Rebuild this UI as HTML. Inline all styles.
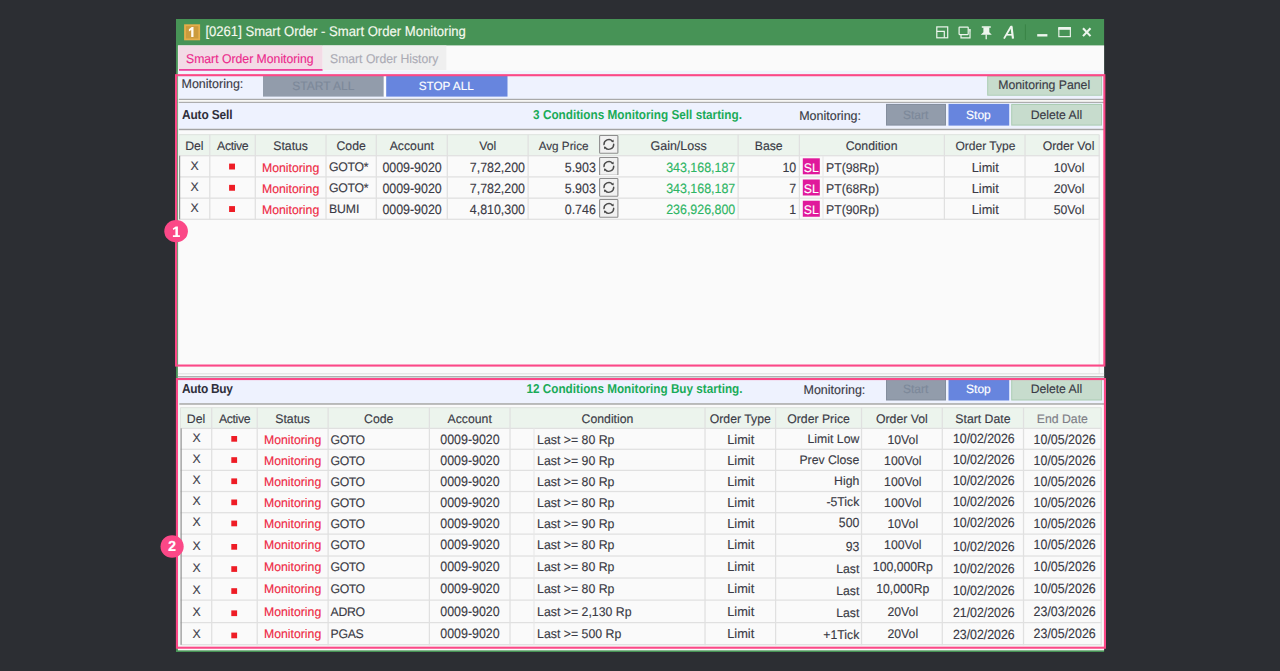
<!DOCTYPE html>
<html><head><meta charset="utf-8"><title>Smart Order Monitoring</title>
<style>
html,body{margin:0;padding:0;}
body{width:1280px;height:671px;overflow:hidden;background:#2c2e33;position:relative;font-family:"Liberation Sans",sans-serif;text-rendering:geometricPrecision;}
.a{position:absolute;}
.t{position:absolute;white-space:pre;height:20px;line-height:20px;-webkit-text-stroke:0.14px currentColor;}
svg.L{position:absolute;left:0;top:0;}
</style></head><body>
<svg class="L" width="1280" height="671" viewBox="0 0 1280 671">
<rect x="176.00" y="19.00" width="928.10" height="633.00" fill="#479356" />
<rect x="177.90" y="45.40" width="926.20" height="604.95" fill="#fafafa" />
<rect x="184.10" y="24.30" width="16.00" height="16.00" fill="#e6ae4a" />
<rect x="185.90" y="26.10" width="12.40" height="12.40" fill="#cb9b3d" />
<path d="M193.5 26.9V36.9H191.2V29.9L188.9 31.5V29.3L191.7 26.9Z" fill="#fffaf0"/>
<rect x="178.20" y="45.50" width="144.40" height="24.00" fill="#f3dbe6" />
<rect x="179.00" y="69.10" width="143.60" height="1.80" fill="#ec2f93" />
<rect x="322.80" y="45.50" width="123.60" height="24.60" fill="#efefef" />
<rect x="177.90" y="70.80" width="926.20" height="3.60" fill="#f1f4fd" />
<rect x="177.90" y="76.00" width="926.20" height="23.00" fill="#eef2fe" />
<rect x="263.00" y="76.00" width="120.80" height="20.60" fill="#929cab" />
<rect x="383.80" y="76.00" width="2.40" height="20.60" fill="#fcfcfe" />
<rect x="386.20" y="76.00" width="121.30" height="20.60" fill="#6785de" />
<rect x="987.20" y="75.90" width="114.90" height="19.80" fill="#a9cbb0" />
<rect x="988.20" y="76.60" width="112.90" height="18.20" fill="#c7dccd" />
<rect x="177.90" y="98.78" width="926.20" height="1.25" fill="#a9a9a9" />
<rect x="177.90" y="100.05" width="926.20" height="1.80" fill="#f7f7f4" />
<rect x="177.90" y="101.80" width="926.20" height="1.20" fill="#adadad" />
<rect x="177.90" y="103.00" width="926.20" height="25.75" fill="#eef2fe" />
<rect x="177.90" y="128.75" width="926.20" height="1.45" fill="#a4a4a4" />
<rect x="886.00" y="103.90" width="60.00" height="21.70" fill="#848e9d" />
<rect x="887.00" y="104.90" width="58.00" height="19.70" fill="#929cab" />
<rect x="948.50" y="103.90" width="60.70" height="21.70" fill="#6785de" />
<rect x="1011.20" y="103.90" width="90.80" height="21.70" fill="#a9cbb0" />
<rect x="1012.20" y="104.90" width="88.80" height="19.70" fill="#c7dccd" />
<rect x="178.90" y="134.60" width="920.30" height="21.10" fill="#ecf4ed" />
<rect x="178.90" y="155.70" width="920.30" height="63.60" fill="#fafafa" />
<rect x="178.90" y="134.00" width="920.30" height="1.20" fill="#e2e6e2" />
<rect x="178.90" y="155.07" width="920.90" height="1.25" fill="#e0e0e0" />
<rect x="178.90" y="176.28" width="920.90" height="1.25" fill="#e0e0e0" />
<rect x="178.90" y="197.53" width="920.90" height="1.25" fill="#e0e0e0" />
<rect x="178.90" y="218.68" width="920.90" height="1.25" fill="#e0e0e0" />
<rect x="209.18" y="134.60" width="1.25" height="85.30" fill="#e0e0e0" />
<rect x="254.68" y="134.60" width="1.25" height="85.30" fill="#e0e0e0" />
<rect x="325.38" y="134.60" width="1.25" height="85.30" fill="#e0e0e0" />
<rect x="375.68" y="134.60" width="1.25" height="85.30" fill="#e0e0e0" />
<rect x="446.68" y="134.60" width="1.25" height="85.30" fill="#e0e0e0" />
<rect x="527.48" y="134.60" width="1.25" height="85.30" fill="#e0e0e0" />
<rect x="737.48" y="134.60" width="1.25" height="85.30" fill="#e0e0e0" />
<rect x="798.77" y="134.60" width="1.25" height="85.30" fill="#e0e0e0" />
<rect x="943.77" y="134.60" width="1.25" height="85.30" fill="#e0e0e0" />
<rect x="1024.38" y="134.60" width="1.25" height="85.30" fill="#e0e0e0" />
<rect x="1098.58" y="134.60" width="1.25" height="85.30" fill="#e0e0e0" />
<rect x="178.30" y="134.60" width="1.20" height="21.10" fill="#e0e4e0" />
<rect x="179.00" y="155.70" width="1.20" height="63.60" fill="#909090" />
<rect x="822.45" y="155.70" width="1.10" height="63.60" fill="#e8e8e8" />
<rect x="1098.65" y="219.30" width="1.10" height="154.50" fill="#e6e6e6" />
<rect x="229.10" y="163.60" width="5.90" height="5.90" fill="#ee1c25" />
<rect x="802.80" y="158.30" width="17.00" height="16.00" fill="#e0199b" />
<rect x="229.10" y="184.85" width="5.90" height="5.90" fill="#ee1c25" />
<rect x="802.80" y="179.50" width="17.00" height="16.00" fill="#e0199b" />
<rect x="229.10" y="206.10" width="5.90" height="5.90" fill="#ee1c25" />
<rect x="802.80" y="200.75" width="17.00" height="16.00" fill="#e0199b" />
<rect x="177.90" y="373.30" width="926.20" height="1.00" fill="#dedede" />
<rect x="177.90" y="376.00" width="926.20" height="1.20" fill="#b0b0b0" />
<rect x="177.90" y="377.05" width="926.20" height="0.90" fill="#c9d6d6" />
<rect x="177.90" y="379.80" width="926.20" height="23.45" fill="#eef2fe" />
<rect x="177.90" y="403.25" width="926.20" height="1.45" fill="#a4a4a4" />
<rect x="886.00" y="379.00" width="60.00" height="21.50" fill="#848e9d" />
<rect x="887.00" y="380.00" width="58.00" height="19.50" fill="#929cab" />
<rect x="948.50" y="379.00" width="60.70" height="21.50" fill="#6785de" />
<rect x="1011.20" y="379.00" width="90.80" height="21.50" fill="#a9cbb0" />
<rect x="1012.20" y="380.00" width="88.80" height="19.50" fill="#c7dccd" />
<rect x="180.40" y="407.60" width="920.80" height="20.80" fill="#ecf4ed" />
<rect x="180.40" y="428.40" width="920.80" height="216.30" fill="#fafafa" />
<rect x="180.40" y="407.00" width="920.80" height="1.20" fill="#e2e6e2" />
<rect x="180.40" y="427.77" width="921.40" height="1.25" fill="#e0e0e0" />
<rect x="180.40" y="448.68" width="921.40" height="1.25" fill="#e0e0e0" />
<rect x="180.40" y="469.77" width="921.40" height="1.25" fill="#e0e0e0" />
<rect x="180.40" y="490.88" width="921.40" height="1.25" fill="#e0e0e0" />
<rect x="180.40" y="512.08" width="921.40" height="1.25" fill="#e0e0e0" />
<rect x="180.40" y="533.48" width="921.40" height="1.25" fill="#e0e0e0" />
<rect x="180.40" y="555.38" width="921.40" height="1.25" fill="#e0e0e0" />
<rect x="180.40" y="577.38" width="921.40" height="1.25" fill="#e0e0e0" />
<rect x="180.40" y="599.48" width="921.40" height="1.25" fill="#e0e0e0" />
<rect x="180.40" y="621.98" width="921.40" height="1.25" fill="#e0e0e0" />
<rect x="180.40" y="644.08" width="921.40" height="1.25" fill="#e0e0e0" />
<rect x="211.07" y="407.60" width="1.25" height="237.70" fill="#e0e0e0" />
<rect x="256.57" y="407.60" width="1.25" height="237.70" fill="#e0e0e0" />
<rect x="327.48" y="407.60" width="1.25" height="237.70" fill="#e0e0e0" />
<rect x="428.77" y="407.60" width="1.25" height="237.70" fill="#e0e0e0" />
<rect x="509.38" y="407.60" width="1.25" height="237.70" fill="#e0e0e0" />
<rect x="704.38" y="407.60" width="1.25" height="237.70" fill="#e0e0e0" />
<rect x="774.98" y="407.60" width="1.25" height="237.70" fill="#e0e0e0" />
<rect x="860.88" y="407.60" width="1.25" height="237.70" fill="#e0e0e0" />
<rect x="941.67" y="407.60" width="1.25" height="237.70" fill="#e0e0e0" />
<rect x="1022.88" y="407.60" width="1.25" height="237.70" fill="#e0e0e0" />
<rect x="1100.58" y="407.60" width="1.25" height="237.70" fill="#e0e0e0" />
<rect x="179.80" y="407.60" width="1.20" height="20.80" fill="#e0e4e0" />
<rect x="180.50" y="428.40" width="1.20" height="216.30" fill="#909090" />
<rect x="533.45" y="428.40" width="1.10" height="216.30" fill="#e8e8e8" />
<rect x="231.30" y="436.00" width="5.80" height="5.70" fill="#ee1c25" />
<rect x="231.30" y="457.20" width="5.80" height="5.70" fill="#ee1c25" />
<rect x="231.30" y="478.40" width="5.80" height="5.70" fill="#ee1c25" />
<rect x="231.30" y="499.50" width="5.80" height="5.70" fill="#ee1c25" />
<rect x="231.30" y="520.60" width="5.80" height="5.70" fill="#ee1c25" />
<rect x="231.30" y="544.00" width="5.80" height="5.70" fill="#ee1c25" />
<rect x="231.30" y="566.20" width="5.80" height="5.70" fill="#ee1c25" />
<rect x="231.30" y="588.20" width="5.80" height="5.70" fill="#ee1c25" />
<rect x="231.30" y="610.40" width="5.80" height="5.70" fill="#ee1c25" />
<rect x="231.30" y="632.60" width="5.80" height="5.70" fill="#ee1c25" />
<rect x="177.90" y="76.00" width="0.90" height="288.60" fill="#e6f3ec" />
<rect x="178.00" y="380.00" width="1.30" height="266.70" fill="#eaf8f0" />
</svg>
<svg class="a" style="left:930px;top:19px" width="174" height="27" viewBox="930 19 174 27" fill="none" stroke="#eef5ee" stroke-width="1.2">
<rect x="936.8" y="26.9" width="10.9" height="10.9"/><path d="M936.8 31.3H944.3V37.8"/>
<rect x="959.1" y="27.1" width="9.1" height="7.5" rx="0.5"/><path d="M961.0 35.0V37.8H970.0V29.7H968.6"/><path d="M968.8 29.2h1.7v2.4h-1.7z" fill="#cfe3d2" stroke="none"/>
<path d="M981.8 27.0H990.8" stroke-width="1.5"/><path d="M983.4 27.2H989.3V32.2L991.8 34.8H980.7L983.4 32.2Z" fill="#eef5ee" stroke="none"/><path d="M986.2 34.6V39.3" stroke-width="1.25"/>
<path d="M1004.0 38.6L1010.9 26.7H1012.3" stroke-width="1.85" stroke-linejoin="bevel"/><path d="M1011.5 26.7L1013.0 38.6" stroke-width="2.2"/><path d="M1006.8 34.8H1012.6" stroke-width="1.6"/>
<path d="M1025.4 24.3V40" stroke="#3a8346" stroke-width="1"/>
<path d="M1037.2 35.3h10.2" stroke-width="2.4"/>
<rect x="1058.85" y="28.4" width="11.5" height="8.25" stroke-width="1.15"/><path d="M1058.25 28.4h12.7" stroke-width="2.8"/>
<path d="M1083.0 28.2L1090.5 36.1M1090.5 28.2L1083.0 36.1" stroke-width="2.1"/>
</svg>
<svg class="a" style="left:599.45px;top:135.20px" width="19.6" height="18.9" viewBox="0 0 19.6 18.9">
<rect x="0.6" y="0.55" width="18.3" height="17.7" rx="0.8" fill="#f1f1f1" stroke="#8d8d8d" stroke-width="1.1"/>
<path d="M5.00 9.62A4.85 4.85 0 0 1 13.45 6.20M14.70 9.28A4.85 4.85 0 0 1 6.25 12.70" fill="none" stroke="#4a4a4a" stroke-width="1.45" stroke-linecap="round"/>
<path d="M14.55 4.60l0.2 2.7l-2.5 -0.4z" fill="#4a4a4a"/>
<path d="M5.15 14.30l-0.2 -2.7l2.5 0.4z" fill="#4a4a4a"/>
</svg>
<svg class="a" style="left:599.45px;top:156.55px" width="19.6" height="18.9" viewBox="0 0 19.6 18.9">
<rect x="0.6" y="0.55" width="18.3" height="17.7" rx="0.8" fill="#f1f1f1" stroke="#8d8d8d" stroke-width="1.1"/>
<path d="M5.00 9.62A4.85 4.85 0 0 1 13.45 6.20M14.70 9.28A4.85 4.85 0 0 1 6.25 12.70" fill="none" stroke="#4a4a4a" stroke-width="1.45" stroke-linecap="round"/>
<path d="M14.55 4.60l0.2 2.7l-2.5 -0.4z" fill="#4a4a4a"/>
<path d="M5.15 14.30l-0.2 -2.7l2.5 0.4z" fill="#4a4a4a"/>
</svg>
<svg class="a" style="left:599.45px;top:177.75px" width="19.6" height="18.9" viewBox="0 0 19.6 18.9">
<rect x="0.6" y="0.55" width="18.3" height="17.7" rx="0.8" fill="#f1f1f1" stroke="#8d8d8d" stroke-width="1.1"/>
<path d="M5.00 9.62A4.85 4.85 0 0 1 13.45 6.20M14.70 9.28A4.85 4.85 0 0 1 6.25 12.70" fill="none" stroke="#4a4a4a" stroke-width="1.45" stroke-linecap="round"/>
<path d="M14.55 4.60l0.2 2.7l-2.5 -0.4z" fill="#4a4a4a"/>
<path d="M5.15 14.30l-0.2 -2.7l2.5 0.4z" fill="#4a4a4a"/>
</svg>
<svg class="a" style="left:599.45px;top:199.00px" width="19.6" height="18.9" viewBox="0 0 19.6 18.9">
<rect x="0.6" y="0.55" width="18.3" height="17.7" rx="0.8" fill="#f1f1f1" stroke="#8d8d8d" stroke-width="1.1"/>
<path d="M5.00 9.62A4.85 4.85 0 0 1 13.45 6.20M14.70 9.28A4.85 4.85 0 0 1 6.25 12.70" fill="none" stroke="#4a4a4a" stroke-width="1.45" stroke-linecap="round"/>
<path d="M14.55 4.60l0.2 2.7l-2.5 -0.4z" fill="#4a4a4a"/>
<path d="M5.15 14.30l-0.2 -2.7l2.5 0.4z" fill="#4a4a4a"/>
</svg>
<svg class="L" style="z-index:4" width="1280" height="671" viewBox="0 0 1280 671">
<rect x="176.05" y="75.20" width="928.30" height="290.35" fill="none" stroke="#fb4887" stroke-width="2.1"/>
<rect x="176.95" y="379.05" width="928.00" height="268.65" fill="none" stroke="#fb4887" stroke-width="2.1"/>
<ellipse cx="176.1" cy="231.2" rx="11.8" ry="11.2" fill="#fb4887"/>
<path d="M175.7 226.4H177.9V235.2H179.9V236.9H172.9V235.2H175.4V228.7L173.3 229.9L172.8 228.4Z" fill="#fff"/>
<ellipse cx="172.1" cy="546.5" rx="11.6" ry="11.3" fill="#fb4887"/>
</svg>
<div class="t" style="top:22px;font-size:13.1px;color:#f5f9ee;transform:scaleY(1.07);transform-origin:0 14px;left:205.40px;">[0261] Smart Order - Smart Order Monitoring</div>
<div class="t" style="top:49px;font-size:12.23px;color:#ec2a8c;transform:scaleY(1.04);transform-origin:0 14px;left:186.00px;">Smart Order Monitoring</div>
<div class="t" style="top:49px;font-size:12.2px;color:#ababb5;transform:scaleY(1.04);transform-origin:0 14px;left:330.00px;">Smart Order History</div>
<div class="t" style="top:74px;font-size:12.5px;color:#3a3a45;transform:scaleY(1.015);transform-origin:0 14px;left:181.50px;">Monitoring:</div>
<div class="t" style="top:76px;font-size:12.0px;color:#7d899a;transform:scaleY(1.015);transform-origin:0 14px;left:173.40px;width:300px;text-align:center;">START ALL</div>
<div class="t" style="top:77px;font-size:11.75px;color:#fff;transform:scaleY(1.015);transform-origin:0 13px;left:296.20px;width:300px;text-align:center;">STOP ALL</div>
<div class="t" style="top:75px;font-size:12.26px;color:#3a3a45;transform:scaleY(1.015);transform-origin:0 14px;left:894.20px;width:300px;text-align:center;">Monitoring Panel</div>
<div class="t" style="top:105px;font-size:11.9px;color:#2f2f3b;font-weight:bold;letter-spacing:-0.12px;-webkit-text-stroke:0;transform:scaleY(1.09);transform-origin:0 14px;left:182.00px;">Auto Sell</div>
<div class="t" style="top:106px;font-size:11.76px;color:#1aab58;font-weight:bold;-webkit-text-stroke:0;transform:scaleY(1.1);transform-origin:0 13px;left:533.10px;">3 Conditions Monitoring Sell starting.</div>
<div class="t" style="top:106px;font-size:12.5px;color:#3a3a45;transform:scaleY(1.015);transform-origin:0 14px;left:799.20px;">Monitoring:</div>
<div class="t" style="top:105px;font-size:12.0px;color:#7d899a;transform:scaleY(1.015);transform-origin:0 14px;left:765.60px;width:300px;text-align:center;">Start</div>
<div class="t" style="top:105px;font-size:12.0px;color:#fff;transform:scaleY(1.015);transform-origin:0 14px;left:828.40px;width:300px;text-align:center;">Stop</div>
<div class="t" style="top:105px;font-size:12.2px;color:#3a3a45;transform:scaleY(1.015);transform-origin:0 14px;left:906.40px;width:300px;text-align:center;">Delete All</div>
<div class="t" style="top:136px;font-size:12.25px;color:#3a3a45;transform:scaleY(1.015);transform-origin:0 14px;left:44.35px;width:300px;text-align:center;">Del</div>
<div class="t" style="top:136px;font-size:12.25px;color:#3a3a45;letter-spacing:-0.35px;transform:scaleY(1.015);transform-origin:0 14px;left:82.73px;width:300px;text-align:center;">Active</div>
<div class="t" style="top:136px;font-size:12.25px;color:#3a3a45;transform:scaleY(1.015);transform-origin:0 14px;left:140.65px;width:300px;text-align:center;">Status</div>
<div class="t" style="top:136px;font-size:12.25px;color:#3a3a45;transform:scaleY(1.015);transform-origin:0 14px;left:201.15px;width:300px;text-align:center;">Code</div>
<div class="t" style="top:136px;font-size:12.25px;color:#3a3a45;transform:scaleY(1.015);transform-origin:0 14px;left:261.80px;width:300px;text-align:center;">Account</div>
<div class="t" style="top:136px;font-size:12.25px;color:#3a3a45;transform:scaleY(1.015);transform-origin:0 14px;left:337.70px;width:300px;text-align:center;">Vol</div>
<div class="t" style="top:137px;font-size:11.7px;color:#3a3a45;transform:scaleY(1.015);transform-origin:0 13px;left:413.60px;width:300px;text-align:center;">Avg Price</div>
<div class="t" style="top:136px;font-size:12.5px;color:#3a3a45;transform:scaleY(1.015);transform-origin:0 14px;left:528.60px;width:300px;text-align:center;">Gain/Loss</div>
<div class="t" style="top:136px;font-size:12.25px;color:#3a3a45;transform:scaleY(1.015);transform-origin:0 14px;left:618.70px;width:300px;text-align:center;">Base</div>
<div class="t" style="top:136px;font-size:12.25px;color:#3a3a45;transform:scaleY(1.015);transform-origin:0 14px;left:721.60px;width:300px;text-align:center;">Condition</div>
<div class="t" style="top:136px;font-size:12.04px;color:#3a3a45;transform:scaleY(1.015);transform-origin:0 14px;left:835.40px;width:300px;text-align:center;">Order Type</div>
<div class="t" style="top:136px;font-size:12.25px;color:#3a3a45;transform:scaleY(1.015);transform-origin:0 14px;left:794.40px;width:300px;text-align:right;">Order Vol</div>
<div class="t" style="top:156px;font-size:12.25px;color:#40404a;transform:scaleY(1.015);transform-origin:0 14px;left:44.60px;width:300px;text-align:center;">X</div>
<div class="t" style="top:158px;font-size:12.26px;color:#ee2743;transform:scaleY(1.015);transform-origin:0 14px;left:262.00px;">Monitoring</div>
<div class="t" style="top:157px;font-size:12.25px;color:#3a3a45;letter-spacing:-0.3px;transform:scaleY(1.015);transform-origin:0 14px;left:329.00px;">GOTO*</div>
<div class="t" style="top:158px;font-size:12.42px;color:#3a3a45;transform:scaleY(1.085);transform-origin:0 14px;left:382.40px;">0009-9020</div>
<div class="t" style="top:158px;font-size:12.42px;color:#3a3a45;transform:scaleY(1.085);transform-origin:0 14px;left:225.00px;width:300px;text-align:right;">7,782,200</div>
<div class="t" style="top:158px;font-size:12.42px;color:#3a3a45;transform:scaleY(1.085);transform-origin:0 14px;left:295.80px;width:300px;text-align:right;">5.903</div>
<div class="t" style="top:158px;font-size:12.42px;color:#2db564;transform:scaleY(1.085);transform-origin:0 14px;left:435.20px;width:300px;text-align:right;">343,168,187</div>
<div class="t" style="top:158px;font-size:12.42px;color:#3a3a45;transform:scaleY(1.085);transform-origin:0 14px;left:496.20px;width:300px;text-align:right;">10</div>
<div class="t" style="top:158px;font-size:12.2px;color:#fff;transform:scaleY(1.015);transform-origin:0 14px;left:661.30px;width:300px;text-align:center;">SL</div>
<div class="t" style="top:158px;font-size:12.25px;color:#3a3a45;transform:scaleY(1.03);transform-origin:0 14px;left:826.00px;">PT(98Rp)</div>
<div class="t" style="top:158px;font-size:12.8px;color:#3a3a45;transform:scaleY(1.015);transform-origin:0 14px;left:835.20px;width:300px;text-align:center;">Limit</div>
<div class="t" style="top:158px;font-size:12.25px;color:#3a3a45;transform:scaleY(1.03);transform-origin:0 14px;left:784.40px;width:300px;text-align:right;">10Vol</div>
<div class="t" style="top:177px;font-size:12.25px;color:#40404a;transform:scaleY(1.015);transform-origin:0 14px;left:44.60px;width:300px;text-align:center;">X</div>
<div class="t" style="top:179px;font-size:12.26px;color:#ee2743;transform:scaleY(1.015);transform-origin:0 14px;left:262.00px;">Monitoring</div>
<div class="t" style="top:178px;font-size:12.25px;color:#3a3a45;letter-spacing:-0.3px;transform:scaleY(1.015);transform-origin:0 14px;left:329.00px;">GOTO*</div>
<div class="t" style="top:179px;font-size:12.42px;color:#3a3a45;transform:scaleY(1.085);transform-origin:0 14px;left:382.40px;">0009-9020</div>
<div class="t" style="top:179px;font-size:12.42px;color:#3a3a45;transform:scaleY(1.085);transform-origin:0 14px;left:225.00px;width:300px;text-align:right;">7,782,200</div>
<div class="t" style="top:179px;font-size:12.42px;color:#3a3a45;transform:scaleY(1.085);transform-origin:0 14px;left:295.80px;width:300px;text-align:right;">5.903</div>
<div class="t" style="top:179px;font-size:12.42px;color:#2db564;transform:scaleY(1.085);transform-origin:0 14px;left:435.20px;width:300px;text-align:right;">343,168,187</div>
<div class="t" style="top:179px;font-size:12.42px;color:#3a3a45;transform:scaleY(1.085);transform-origin:0 14px;left:496.20px;width:300px;text-align:right;">7</div>
<div class="t" style="top:179px;font-size:12.2px;color:#fff;transform:scaleY(1.015);transform-origin:0 14px;left:661.30px;width:300px;text-align:center;">SL</div>
<div class="t" style="top:179px;font-size:12.25px;color:#3a3a45;transform:scaleY(1.03);transform-origin:0 14px;left:826.00px;">PT(68Rp)</div>
<div class="t" style="top:179px;font-size:12.8px;color:#3a3a45;transform:scaleY(1.015);transform-origin:0 14px;left:835.20px;width:300px;text-align:center;">Limit</div>
<div class="t" style="top:179px;font-size:12.25px;color:#3a3a45;transform:scaleY(1.03);transform-origin:0 14px;left:784.40px;width:300px;text-align:right;">20Vol</div>
<div class="t" style="top:198px;font-size:12.25px;color:#40404a;transform:scaleY(1.015);transform-origin:0 14px;left:44.60px;width:300px;text-align:center;">X</div>
<div class="t" style="top:200px;font-size:12.26px;color:#ee2743;transform:scaleY(1.015);transform-origin:0 14px;left:262.00px;">Monitoring</div>
<div class="t" style="top:199px;font-size:12.25px;color:#3a3a45;letter-spacing:-0.1px;transform:scaleY(1.015);transform-origin:0 14px;left:329.00px;">BUMI</div>
<div class="t" style="top:200px;font-size:12.42px;color:#3a3a45;transform:scaleY(1.085);transform-origin:0 14px;left:382.40px;">0009-9020</div>
<div class="t" style="top:200px;font-size:12.42px;color:#3a3a45;transform:scaleY(1.085);transform-origin:0 14px;left:225.00px;width:300px;text-align:right;">4,810,300</div>
<div class="t" style="top:200px;font-size:12.42px;color:#3a3a45;transform:scaleY(1.085);transform-origin:0 14px;left:295.80px;width:300px;text-align:right;">0.746</div>
<div class="t" style="top:200px;font-size:12.42px;color:#2db564;transform:scaleY(1.085);transform-origin:0 14px;left:435.20px;width:300px;text-align:right;">236,926,800</div>
<div class="t" style="top:200px;font-size:12.42px;color:#3a3a45;transform:scaleY(1.085);transform-origin:0 14px;left:496.20px;width:300px;text-align:right;">1</div>
<div class="t" style="top:200px;font-size:12.2px;color:#fff;transform:scaleY(1.015);transform-origin:0 14px;left:661.30px;width:300px;text-align:center;">SL</div>
<div class="t" style="top:200px;font-size:12.25px;color:#3a3a45;transform:scaleY(1.03);transform-origin:0 14px;left:826.00px;">PT(90Rp)</div>
<div class="t" style="top:200px;font-size:12.8px;color:#3a3a45;transform:scaleY(1.015);transform-origin:0 14px;left:835.20px;width:300px;text-align:center;">Limit</div>
<div class="t" style="top:200px;font-size:12.25px;color:#3a3a45;transform:scaleY(1.03);transform-origin:0 14px;left:784.40px;width:300px;text-align:right;">50Vol</div>
<div class="t" style="top:379px;font-size:11.9px;color:#2f2f3b;font-weight:bold;letter-spacing:-0.3px;-webkit-text-stroke:0;transform:scaleY(1.09);transform-origin:0 14px;left:182.00px;">Auto Buy</div>
<div class="t" style="top:380px;font-size:11.71px;color:#1aab58;font-weight:bold;-webkit-text-stroke:0;transform:scaleY(1.1);transform-origin:0 13px;left:526.60px;">12 Conditions Monitoring Buy starting.</div>
<div class="t" style="top:380px;font-size:12.5px;color:#3a3a45;transform:scaleY(1.015);transform-origin:0 14px;left:803.50px;">Monitoring:</div>
<div class="t" style="top:379px;font-size:12.0px;color:#7d899a;transform:scaleY(1.015);transform-origin:0 14px;left:765.60px;width:300px;text-align:center;">Start</div>
<div class="t" style="top:379px;font-size:12.0px;color:#fff;transform:scaleY(1.015);transform-origin:0 14px;left:828.40px;width:300px;text-align:center;">Stop</div>
<div class="t" style="top:379px;font-size:12.2px;color:#3a3a45;transform:scaleY(1.015);transform-origin:0 14px;left:906.40px;width:300px;text-align:center;">Delete All</div>
<div class="t" style="top:409px;font-size:12.25px;color:#3a3a45;transform:scaleY(1.015);transform-origin:0 14px;left:46.05px;width:300px;text-align:center;">Del</div>
<div class="t" style="top:409px;font-size:12.25px;color:#3a3a45;letter-spacing:-0.35px;transform:scaleY(1.015);transform-origin:0 14px;left:84.62px;width:300px;text-align:center;">Active</div>
<div class="t" style="top:409px;font-size:12.25px;color:#3a3a45;transform:scaleY(1.015);transform-origin:0 14px;left:142.65px;width:300px;text-align:center;">Status</div>
<div class="t" style="top:409px;font-size:12.25px;color:#3a3a45;transform:scaleY(1.015);transform-origin:0 14px;left:228.75px;width:300px;text-align:center;">Code</div>
<div class="t" style="top:409px;font-size:12.25px;color:#3a3a45;transform:scaleY(1.015);transform-origin:0 14px;left:319.70px;width:300px;text-align:center;">Account</div>
<div class="t" style="top:409px;font-size:12.25px;color:#3a3a45;transform:scaleY(1.015);transform-origin:0 14px;left:457.50px;width:300px;text-align:center;">Condition</div>
<div class="t" style="top:409px;font-size:12.25px;color:#3a3a45;transform:scaleY(1.015);transform-origin:0 14px;left:590.30px;width:300px;text-align:center;">Order Type</div>
<div class="t" style="top:409px;font-size:12.25px;color:#3a3a45;transform:scaleY(1.015);transform-origin:0 14px;left:668.55px;width:300px;text-align:center;">Order Price</div>
<div class="t" style="top:409px;font-size:12.25px;color:#3a3a45;transform:scaleY(1.015);transform-origin:0 14px;left:751.90px;width:300px;text-align:center;">Order Vol</div>
<div class="t" style="top:409px;font-size:12.25px;color:#3a3a45;transform:scaleY(1.015);transform-origin:0 14px;left:832.90px;width:300px;text-align:center;">Start Date</div>
<div class="t" style="top:409px;font-size:12.25px;color:#7e7e86;transform:scaleY(1.015);transform-origin:0 14px;left:912.35px;width:300px;text-align:center;">End Date</div>
<div class="t" style="top:428px;font-size:12.25px;color:#40404a;transform:scaleY(1.015);transform-origin:0 14px;left:46.70px;width:300px;text-align:center;">X</div>
<div class="t" style="top:430px;font-size:12.26px;color:#ee2743;transform:scaleY(1.015);transform-origin:0 14px;left:264.00px;">Monitoring</div>
<div class="t" style="top:430px;font-size:12.25px;color:#3a3a45;letter-spacing:-0.4px;transform:scaleY(1.015);transform-origin:0 14px;left:330.50px;">GOTO</div>
<div class="t" style="top:430px;font-size:12.42px;color:#3a3a45;transform:scaleY(1.085);transform-origin:0 14px;left:440.30px;">0009-9020</div>
<div class="t" style="top:430px;font-size:12.32px;color:#3a3a45;transform:scaleY(1.03);transform-origin:0 14px;left:537.10px;">Last >= 80 Rp</div>
<div class="t" style="top:430px;font-size:12.8px;color:#3a3a45;transform:scaleY(1.015);transform-origin:0 14px;left:590.75px;width:300px;text-align:center;">Limit</div>
<div class="t" style="top:429px;font-size:12.25px;color:#3a3a45;transform:scaleY(1.015);transform-origin:0 14px;left:559.30px;width:300px;text-align:right;">Limit Low</div>
<div class="t" style="top:430px;font-size:12.25px;color:#3a3a45;transform:scaleY(1.03);transform-origin:0 14px;left:752.80px;width:300px;text-align:center;">10Vol</div>
<div class="t" style="top:429px;font-size:12.35px;color:#3a3a45;transform:scaleY(1.085);transform-origin:0 14px;left:714.70px;width:300px;text-align:right;">10/02/2026</div>
<div class="t" style="top:430px;font-size:12.42px;color:#3a3a45;transform:scaleY(1.085);transform-origin:0 14px;left:795.70px;width:300px;text-align:right;">10/05/2026</div>
<div class="t" style="top:449px;font-size:12.25px;color:#40404a;transform:scaleY(1.015);transform-origin:0 14px;left:46.70px;width:300px;text-align:center;">X</div>
<div class="t" style="top:451px;font-size:12.26px;color:#ee2743;transform:scaleY(1.015);transform-origin:0 14px;left:264.00px;">Monitoring</div>
<div class="t" style="top:451px;font-size:12.25px;color:#3a3a45;letter-spacing:-0.4px;transform:scaleY(1.015);transform-origin:0 14px;left:330.50px;">GOTO</div>
<div class="t" style="top:451px;font-size:12.42px;color:#3a3a45;transform:scaleY(1.085);transform-origin:0 14px;left:440.30px;">0009-9020</div>
<div class="t" style="top:451px;font-size:12.32px;color:#3a3a45;transform:scaleY(1.03);transform-origin:0 14px;left:537.10px;">Last >= 90 Rp</div>
<div class="t" style="top:451px;font-size:12.8px;color:#3a3a45;transform:scaleY(1.015);transform-origin:0 14px;left:590.75px;width:300px;text-align:center;">Limit</div>
<div class="t" style="top:450px;font-size:12.25px;color:#3a3a45;transform:scaleY(1.015);transform-origin:0 14px;left:559.30px;width:300px;text-align:right;">Prev Close</div>
<div class="t" style="top:451px;font-size:12.25px;color:#3a3a45;transform:scaleY(1.03);transform-origin:0 14px;left:752.80px;width:300px;text-align:center;">100Vol</div>
<div class="t" style="top:450px;font-size:12.35px;color:#3a3a45;transform:scaleY(1.085);transform-origin:0 14px;left:714.70px;width:300px;text-align:right;">10/02/2026</div>
<div class="t" style="top:451px;font-size:12.42px;color:#3a3a45;transform:scaleY(1.085);transform-origin:0 14px;left:795.70px;width:300px;text-align:right;">10/05/2026</div>
<div class="t" style="top:470px;font-size:12.25px;color:#40404a;transform:scaleY(1.015);transform-origin:0 14px;left:46.70px;width:300px;text-align:center;">X</div>
<div class="t" style="top:472px;font-size:12.26px;color:#ee2743;transform:scaleY(1.015);transform-origin:0 14px;left:264.00px;">Monitoring</div>
<div class="t" style="top:472px;font-size:12.25px;color:#3a3a45;letter-spacing:-0.4px;transform:scaleY(1.015);transform-origin:0 14px;left:330.50px;">GOTO</div>
<div class="t" style="top:472px;font-size:12.42px;color:#3a3a45;transform:scaleY(1.085);transform-origin:0 14px;left:440.30px;">0009-9020</div>
<div class="t" style="top:472px;font-size:12.32px;color:#3a3a45;transform:scaleY(1.03);transform-origin:0 14px;left:537.10px;">Last >= 80 Rp</div>
<div class="t" style="top:472px;font-size:12.8px;color:#3a3a45;transform:scaleY(1.015);transform-origin:0 14px;left:590.75px;width:300px;text-align:center;">Limit</div>
<div class="t" style="top:471px;font-size:12.25px;color:#3a3a45;transform:scaleY(1.015);transform-origin:0 14px;left:559.30px;width:300px;text-align:right;">High</div>
<div class="t" style="top:472px;font-size:12.25px;color:#3a3a45;transform:scaleY(1.03);transform-origin:0 14px;left:752.80px;width:300px;text-align:center;">100Vol</div>
<div class="t" style="top:471px;font-size:12.35px;color:#3a3a45;transform:scaleY(1.085);transform-origin:0 14px;left:714.70px;width:300px;text-align:right;">10/02/2026</div>
<div class="t" style="top:472px;font-size:12.42px;color:#3a3a45;transform:scaleY(1.085);transform-origin:0 14px;left:795.70px;width:300px;text-align:right;">10/05/2026</div>
<div class="t" style="top:491px;font-size:12.25px;color:#40404a;transform:scaleY(1.015);transform-origin:0 14px;left:46.70px;width:300px;text-align:center;">X</div>
<div class="t" style="top:493px;font-size:12.26px;color:#ee2743;transform:scaleY(1.015);transform-origin:0 14px;left:264.00px;">Monitoring</div>
<div class="t" style="top:493px;font-size:12.25px;color:#3a3a45;letter-spacing:-0.4px;transform:scaleY(1.015);transform-origin:0 14px;left:330.50px;">GOTO</div>
<div class="t" style="top:493px;font-size:12.42px;color:#3a3a45;transform:scaleY(1.085);transform-origin:0 14px;left:440.30px;">0009-9020</div>
<div class="t" style="top:493px;font-size:12.32px;color:#3a3a45;transform:scaleY(1.03);transform-origin:0 14px;left:537.10px;">Last >= 80 Rp</div>
<div class="t" style="top:493px;font-size:12.8px;color:#3a3a45;transform:scaleY(1.015);transform-origin:0 14px;left:590.75px;width:300px;text-align:center;">Limit</div>
<div class="t" style="top:492px;font-size:12.25px;color:#3a3a45;transform:scaleY(1.03);transform-origin:0 14px;left:559.30px;width:300px;text-align:right;">-5Tick</div>
<div class="t" style="top:493px;font-size:12.25px;color:#3a3a45;transform:scaleY(1.03);transform-origin:0 14px;left:752.80px;width:300px;text-align:center;">100Vol</div>
<div class="t" style="top:492px;font-size:12.35px;color:#3a3a45;transform:scaleY(1.085);transform-origin:0 14px;left:714.70px;width:300px;text-align:right;">10/02/2026</div>
<div class="t" style="top:493px;font-size:12.42px;color:#3a3a45;transform:scaleY(1.085);transform-origin:0 14px;left:795.70px;width:300px;text-align:right;">10/05/2026</div>
<div class="t" style="top:512px;font-size:12.25px;color:#40404a;transform:scaleY(1.015);transform-origin:0 14px;left:46.70px;width:300px;text-align:center;">X</div>
<div class="t" style="top:514px;font-size:12.26px;color:#ee2743;transform:scaleY(1.015);transform-origin:0 14px;left:264.00px;">Monitoring</div>
<div class="t" style="top:514px;font-size:12.25px;color:#3a3a45;letter-spacing:-0.4px;transform:scaleY(1.015);transform-origin:0 14px;left:330.50px;">GOTO</div>
<div class="t" style="top:514px;font-size:12.42px;color:#3a3a45;transform:scaleY(1.085);transform-origin:0 14px;left:440.30px;">0009-9020</div>
<div class="t" style="top:514px;font-size:12.32px;color:#3a3a45;transform:scaleY(1.03);transform-origin:0 14px;left:537.10px;">Last >= 90 Rp</div>
<div class="t" style="top:514px;font-size:12.8px;color:#3a3a45;transform:scaleY(1.015);transform-origin:0 14px;left:590.75px;width:300px;text-align:center;">Limit</div>
<div class="t" style="top:513px;font-size:12.25px;color:#3a3a45;transform:scaleY(1.085);transform-origin:0 14px;left:559.30px;width:300px;text-align:right;">500</div>
<div class="t" style="top:514px;font-size:12.25px;color:#3a3a45;transform:scaleY(1.03);transform-origin:0 14px;left:752.80px;width:300px;text-align:center;">10Vol</div>
<div class="t" style="top:513px;font-size:12.35px;color:#3a3a45;transform:scaleY(1.085);transform-origin:0 14px;left:714.70px;width:300px;text-align:right;">10/02/2026</div>
<div class="t" style="top:514px;font-size:12.42px;color:#3a3a45;transform:scaleY(1.085);transform-origin:0 14px;left:795.70px;width:300px;text-align:right;">10/05/2026</div>
<div class="t" style="top:536px;font-size:12.25px;color:#40404a;transform:scaleY(1.015);transform-origin:0 14px;left:46.70px;width:300px;text-align:center;">X</div>
<div class="t" style="top:535px;font-size:12.26px;color:#ee2743;transform:scaleY(1.015);transform-origin:0 14px;left:264.00px;">Monitoring</div>
<div class="t" style="top:535px;font-size:12.25px;color:#3a3a45;letter-spacing:-0.4px;transform:scaleY(1.015);transform-origin:0 14px;left:330.50px;">GOTO</div>
<div class="t" style="top:535px;font-size:12.42px;color:#3a3a45;transform:scaleY(1.085);transform-origin:0 14px;left:440.30px;">0009-9020</div>
<div class="t" style="top:535px;font-size:12.32px;color:#3a3a45;transform:scaleY(1.03);transform-origin:0 14px;left:537.10px;">Last >= 80 Rp</div>
<div class="t" style="top:535px;font-size:12.8px;color:#3a3a45;transform:scaleY(1.015);transform-origin:0 14px;left:590.75px;width:300px;text-align:center;">Limit</div>
<div class="t" style="top:537px;font-size:12.25px;color:#3a3a45;transform:scaleY(1.085);transform-origin:0 14px;left:559.30px;width:300px;text-align:right;">93</div>
<div class="t" style="top:535px;font-size:12.25px;color:#3a3a45;transform:scaleY(1.03);transform-origin:0 14px;left:752.80px;width:300px;text-align:center;">100Vol</div>
<div class="t" style="top:537px;font-size:12.35px;color:#3a3a45;transform:scaleY(1.085);transform-origin:0 14px;left:714.70px;width:300px;text-align:right;">10/02/2026</div>
<div class="t" style="top:535px;font-size:12.42px;color:#3a3a45;transform:scaleY(1.085);transform-origin:0 14px;left:795.70px;width:300px;text-align:right;">10/05/2026</div>
<div class="t" style="top:558px;font-size:12.25px;color:#40404a;transform:scaleY(1.015);transform-origin:0 14px;left:46.70px;width:300px;text-align:center;">X</div>
<div class="t" style="top:557px;font-size:12.26px;color:#ee2743;transform:scaleY(1.015);transform-origin:0 14px;left:264.00px;">Monitoring</div>
<div class="t" style="top:557px;font-size:12.25px;color:#3a3a45;letter-spacing:-0.4px;transform:scaleY(1.015);transform-origin:0 14px;left:330.50px;">GOTO</div>
<div class="t" style="top:557px;font-size:12.42px;color:#3a3a45;transform:scaleY(1.085);transform-origin:0 14px;left:440.30px;">0009-9020</div>
<div class="t" style="top:557px;font-size:12.32px;color:#3a3a45;transform:scaleY(1.03);transform-origin:0 14px;left:537.10px;">Last >= 80 Rp</div>
<div class="t" style="top:557px;font-size:12.8px;color:#3a3a45;transform:scaleY(1.015);transform-origin:0 14px;left:590.75px;width:300px;text-align:center;">Limit</div>
<div class="t" style="top:559px;font-size:12.25px;color:#3a3a45;transform:scaleY(1.015);transform-origin:0 14px;left:559.30px;width:300px;text-align:right;">Last</div>
<div class="t" style="top:557px;font-size:12.25px;color:#3a3a45;transform:scaleY(1.06);transform-origin:0 14px;left:752.80px;width:300px;text-align:center;">100,000Rp</div>
<div class="t" style="top:559px;font-size:12.35px;color:#3a3a45;transform:scaleY(1.085);transform-origin:0 14px;left:714.70px;width:300px;text-align:right;">10/02/2026</div>
<div class="t" style="top:557px;font-size:12.42px;color:#3a3a45;transform:scaleY(1.085);transform-origin:0 14px;left:795.70px;width:300px;text-align:right;">10/05/2026</div>
<div class="t" style="top:580px;font-size:12.25px;color:#40404a;transform:scaleY(1.015);transform-origin:0 14px;left:46.70px;width:300px;text-align:center;">X</div>
<div class="t" style="top:579px;font-size:12.26px;color:#ee2743;transform:scaleY(1.015);transform-origin:0 14px;left:264.00px;">Monitoring</div>
<div class="t" style="top:579px;font-size:12.25px;color:#3a3a45;letter-spacing:-0.4px;transform:scaleY(1.015);transform-origin:0 14px;left:330.50px;">GOTO</div>
<div class="t" style="top:579px;font-size:12.42px;color:#3a3a45;transform:scaleY(1.085);transform-origin:0 14px;left:440.30px;">0009-9020</div>
<div class="t" style="top:579px;font-size:12.32px;color:#3a3a45;transform:scaleY(1.03);transform-origin:0 14px;left:537.10px;">Last >= 80 Rp</div>
<div class="t" style="top:579px;font-size:12.8px;color:#3a3a45;transform:scaleY(1.015);transform-origin:0 14px;left:590.75px;width:300px;text-align:center;">Limit</div>
<div class="t" style="top:581px;font-size:12.25px;color:#3a3a45;transform:scaleY(1.015);transform-origin:0 14px;left:559.30px;width:300px;text-align:right;">Last</div>
<div class="t" style="top:579px;font-size:12.25px;color:#3a3a45;transform:scaleY(1.06);transform-origin:0 14px;left:752.80px;width:300px;text-align:center;">10,000Rp</div>
<div class="t" style="top:581px;font-size:12.35px;color:#3a3a45;transform:scaleY(1.085);transform-origin:0 14px;left:714.70px;width:300px;text-align:right;">10/02/2026</div>
<div class="t" style="top:579px;font-size:12.42px;color:#3a3a45;transform:scaleY(1.085);transform-origin:0 14px;left:795.70px;width:300px;text-align:right;">10/05/2026</div>
<div class="t" style="top:602px;font-size:12.25px;color:#40404a;transform:scaleY(1.015);transform-origin:0 14px;left:46.70px;width:300px;text-align:center;">X</div>
<div class="t" style="top:602px;font-size:12.26px;color:#ee2743;transform:scaleY(1.015);transform-origin:0 14px;left:264.00px;">Monitoring</div>
<div class="t" style="top:602px;font-size:12.25px;color:#3a3a45;letter-spacing:-0.25px;transform:scaleY(1.015);transform-origin:0 14px;left:330.50px;">ADRO</div>
<div class="t" style="top:602px;font-size:12.42px;color:#3a3a45;transform:scaleY(1.085);transform-origin:0 14px;left:440.30px;">0009-9020</div>
<div class="t" style="top:602px;font-size:12.32px;color:#3a3a45;transform:scaleY(1.03);transform-origin:0 14px;left:537.10px;">Last >= 2,130 Rp</div>
<div class="t" style="top:602px;font-size:12.8px;color:#3a3a45;transform:scaleY(1.015);transform-origin:0 14px;left:590.75px;width:300px;text-align:center;">Limit</div>
<div class="t" style="top:603px;font-size:12.25px;color:#3a3a45;transform:scaleY(1.015);transform-origin:0 14px;left:559.30px;width:300px;text-align:right;">Last</div>
<div class="t" style="top:602px;font-size:12.25px;color:#3a3a45;transform:scaleY(1.03);transform-origin:0 14px;left:752.80px;width:300px;text-align:center;">20Vol</div>
<div class="t" style="top:603px;font-size:12.35px;color:#3a3a45;transform:scaleY(1.085);transform-origin:0 14px;left:714.70px;width:300px;text-align:right;">21/02/2026</div>
<div class="t" style="top:602px;font-size:12.42px;color:#3a3a45;transform:scaleY(1.085);transform-origin:0 14px;left:795.70px;width:300px;text-align:right;">23/03/2026</div>
<div class="t" style="top:624px;font-size:12.25px;color:#40404a;transform:scaleY(1.015);transform-origin:0 14px;left:46.70px;width:300px;text-align:center;">X</div>
<div class="t" style="top:624px;font-size:12.26px;color:#ee2743;transform:scaleY(1.015);transform-origin:0 14px;left:264.00px;">Monitoring</div>
<div class="t" style="top:624px;font-size:12.25px;color:#3a3a45;letter-spacing:-0.25px;transform:scaleY(1.015);transform-origin:0 14px;left:330.50px;">PGAS</div>
<div class="t" style="top:624px;font-size:12.42px;color:#3a3a45;transform:scaleY(1.085);transform-origin:0 14px;left:440.30px;">0009-9020</div>
<div class="t" style="top:624px;font-size:12.32px;color:#3a3a45;transform:scaleY(1.03);transform-origin:0 14px;left:537.10px;">Last >= 500 Rp</div>
<div class="t" style="top:624px;font-size:12.8px;color:#3a3a45;transform:scaleY(1.015);transform-origin:0 14px;left:590.75px;width:300px;text-align:center;">Limit</div>
<div class="t" style="top:625px;font-size:12.25px;color:#3a3a45;transform:scaleY(1.03);transform-origin:0 14px;left:559.30px;width:300px;text-align:right;">+1Tick</div>
<div class="t" style="top:624px;font-size:12.25px;color:#3a3a45;transform:scaleY(1.03);transform-origin:0 14px;left:752.80px;width:300px;text-align:center;">20Vol</div>
<div class="t" style="top:625px;font-size:12.35px;color:#3a3a45;transform:scaleY(1.085);transform-origin:0 14px;left:714.70px;width:300px;text-align:right;">23/02/2026</div>
<div class="t" style="top:624px;font-size:12.42px;color:#3a3a45;transform:scaleY(1.085);transform-origin:0 14px;left:795.70px;width:300px;text-align:right;">23/05/2026</div>
<div class="t" style="z-index:5;left:152.05px;width:40px;text-align:center;top:537px;font-size:14.5px;font-weight:bold;color:#fff;">2</div>
</body></html>
